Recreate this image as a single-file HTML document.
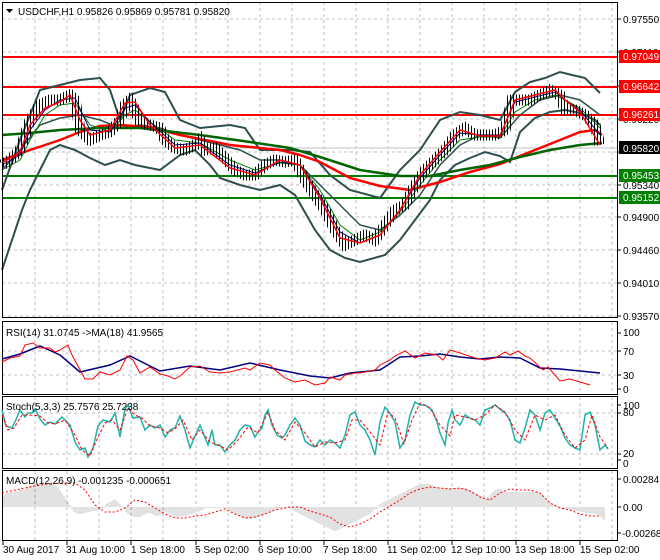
<!DOCTYPE html>
<html><head><meta charset="utf-8"><style>
html,body{margin:0;padding:0;background:#fff;width:660px;height:560px;overflow:hidden}
svg text{font-family:"Liberation Sans",sans-serif;font-size:10px;fill:#000}
</style></head><body>
<svg width="660" height="560" xmlns="http://www.w3.org/2000/svg">
<defs>
<pattern id="bars" width="3" height="20" patternUnits="userSpaceOnUse"><rect x="0" y="0" width="1" height="20" fill="#000"/></pattern>
</defs>
<rect width="660" height="560" fill="#fff"/>
<g stroke="#c0c0c0" stroke-dasharray="3,3" stroke-width="1">
<path d="M35 2V318M67 2V318M99 2V318M131 2V318M163 2V318M196 2V318M228 2V318M260 2V318M292 2V318M324 2V318M356 2V318M388 2V318M420 2V318M452 2V318M484 2V318M516 2V318M548 2V318M580 2V318M612 2V318"/>
<path d="M2 19H617M2 52H617M2 86H617M2 119H617M2 152H617M2 185H617M2 217H617M2 250H617M2 283H617M2 316H617"/>
<path d="M35 322V395M67 322V395M99 322V395M131 322V395M163 322V395M196 322V395M228 322V395M260 322V395M292 322V395M324 322V395M356 322V395M388 322V395M420 322V395M452 322V395M484 322V395M516 322V395M548 322V395M580 322V395M612 322V395"/>
<path d="M2 351H617M2 375H617"/>
<path d="M35 397V469M67 397V469M99 397V469M131 397V469M163 397V469M196 397V469M228 397V469M260 397V469M292 397V469M324 397V469M356 397V469M388 397V469M420 397V469M452 397V469M484 397V469M516 397V469M548 397V469M580 397V469M612 397V469"/>
<path d="M2 413H617M2 454H617"/>
<path d="M35 471V540M67 471V540M99 471V540M131 471V540M163 471V540M196 471V540M228 471V540M260 471V540M292 471V540M324 471V540M356 471V540M388 471V540M420 471V540M452 471V540M484 471V540M516 471V540M548 471V540M580 471V540M612 471V540"/>
</g>
<line x1="2" y1="148" x2="617" y2="148" stroke="#c0c0c0"/>
<g stroke-width="2">
<line x1="2" y1="57" x2="617" y2="57" stroke="#ff0000"/>
<line x1="2" y1="87" x2="617" y2="87" stroke="#ff0000"/>
<line x1="2" y1="115" x2="617" y2="115" stroke="#ff0000"/>
<line x1="2" y1="176" x2="617" y2="176" stroke="#008000"/>
<line x1="2" y1="198" x2="617" y2="198" stroke="#008000"/>
</g>
<g fill="none" stroke="#2f4f4f" stroke-width="2">
<polyline points="2,190 20,140 40,90 60,85 80,80 100,78 110,90 120,120 130,95 150,88 165,92 180,120 200,128 230,125 245,128 260,150 290,150 310,152 330,175 350,190 380,198 400,170 420,150 440,120 460,112 480,115 500,120 515,92 530,82 545,78 560,72 572,75 585,78 600,93"/>
<polyline points="2,270 12,240 22,210 30,190 40,170 50,150 60,145 75,150 90,158 105,165 120,160 135,165 160,170 180,155 195,150 210,165 220,178 240,185 260,190 280,185 295,195 315,230 330,250 345,258 360,262 385,255 400,240 415,220 430,200 440,180 455,165 470,158 485,152 500,156 510,162 520,132 535,118 550,112 565,110 580,113 595,120 600,125"/>
<polyline points="2,170 20,150 40,125 60,118 80,115 100,120 120,128 140,125 160,128 180,135 200,140 220,145 240,150 260,160 280,160 300,165 320,185 340,205 360,225 380,230 400,215 420,195 440,165 460,145 480,135 500,138 520,115 540,100 560,95 580,100 600,115" stroke-width="1.5"/>
</g>
<polyline fill="none" stroke="#ff0000" stroke-width="2.5" points="2,160 30,150 60,140 80,132 100,126 120,125 150,127 180,135 230,145 280,150 300,155 320,162 350,178 380,186 410,190 440,182 470,172 500,164 530,152 560,140 580,132 595,130 602,135"/>
<polyline fill="none" stroke="#006400" stroke-width="2.5" points="2,135 30,133 60,130 100,128 140,128 200,135 250,142 290,148 320,157 360,170 400,176 430,176 460,170 490,165 520,157 550,150 580,145 602,143"/>
<polyline fill="none" stroke="#008000" stroke-width="1" points="2,170 20,160 30,140 45,115 60,105 75,103 90,125 110,132 125,115 135,110 150,122 175,140 200,143 230,160 255,170 280,163 300,165 320,190 340,225 360,240 380,232 400,212 420,185 440,160 460,140 480,137 500,137 515,112 535,100 555,95 565,100 580,108 600,128"/>
<polyline fill="none" stroke="#000080" stroke-width="1" points="2,165 20,155 30,130 45,110 60,100 75,98 90,130 110,132 125,108 135,105 150,122 175,145 200,143 230,165 255,173 280,162 300,165 320,195 340,232 360,243 380,235 400,210 420,178 440,155 460,133 480,135 500,135 515,102 535,97 555,92 565,100 580,110 600,135"/>
<polyline fill="none" stroke="url(#bars)" stroke-width="11" points="2,165 10,160 20,150 30,120 40,105 50,100 60,100 70,95 75,100 80,130 90,140 100,135 110,132 120,120 125,105 130,100 135,110 140,122 150,125 160,128 165,140 175,148 185,150 195,145 200,140 205,150 215,148 225,158 235,170 245,175 255,175 265,165 275,160 285,162 295,160 305,180 315,195 325,210 335,230 345,245 355,240 365,235 375,240 385,225 395,210 405,205 415,185 425,170 435,160 445,150 455,135 465,128 475,135 485,135 495,135 505,130 512,100 520,100 530,100 540,95 550,90 560,95 565,110 575,110 585,115 595,125 600,145"/>
<polyline fill="none" stroke="#ff0000" stroke-width="1.5" points="2,163 20,152 30,125 45,108 60,102 70,95 80,120 90,135 110,130 125,103 135,102 150,125 175,148 200,145 230,168 255,175 280,160 300,165 320,198 340,238 360,243 380,235 400,210 420,175 440,152 460,130 480,136 500,136 515,100 535,95 555,90 565,100 580,112 600,145"/>
<g fill="none" stroke="#000" stroke-width="1">
<rect x="2.5" y="2.5" width="615" height="315"/>
<rect x="2.5" y="321.5" width="615" height="73"/>
<rect x="2.5" y="396.5" width="615" height="72"/>
<rect x="2.5" y="470.5" width="615" height="70"/>
</g>
<g stroke="#000"><path d="M617 19h4M617 52h4M617 86h4M617 119h4M617 152h4M617 185h4M617 217h4M617 250h4M617 283h4M617 316h4M617 333h4M617 351h4M617 375h4M617 389h4M617 405h4M617 413h4M617 454h4M617 460h4M617 479h4M617 507h4M617 533h4M3 541v4M67 541v4M131 541v4M196 541v4M260 541v4M324 541v4M388 541v4M452 541v4M516 541v4M580 541v4"/></g>
<g>
<text x="623" y="23">0.97550</text>
<text x="623" y="56">0.97110</text>
<text x="623" y="90">0.96660</text>
<text x="623" y="123">0.96220</text>
<text x="623" y="189">0.95340</text>
<text x="623" y="221">0.94900</text>
<text x="623" y="254">0.94460</text>
<text x="623" y="287">0.94010</text>
<text x="623" y="320">0.93570</text>
</g>
<rect x="619" y="50" width="41" height="13" fill="#ff0000"/><text x="623" y="60" style="fill:#fff">0.97049</text>
<rect x="619" y="80" width="41" height="13" fill="#ff0000"/><text x="623" y="90" style="fill:#fff">0.96642</text>
<rect x="619" y="108" width="41" height="13" fill="#ff0000"/><text x="623" y="118" style="fill:#fff">0.96261</text>
<rect x="619" y="141" width="41" height="13" fill="#000"/><text x="623" y="152" style="fill:#fff">0.95820</text>
<rect x="619" y="169" width="41" height="13" fill="#008000"/><text x="623" y="179" style="fill:#fff">0.95453</text>
<rect x="619" y="191" width="41" height="13" fill="#008000"/><text x="623" y="201" style="fill:#fff">0.95152</text>
<path d="M6 9h7l-3.5 4z" fill="#000"/>
<text x="18" y="15">USDCHF,H1  0.95826 0.95869 0.95781 0.95820</text>
<text x="6" y="336">RSI(14) 31.0745  -&gt;MA(18) 41.9565</text>
<polyline fill="none" stroke="#000080" stroke-width="1.5" points="2,359 20,354 40,346 60,355 80,372 110,365 130,356 160,371 190,366 220,370 250,363 280,370 310,376 330,378 350,373 380,370 400,357 420,356 440,354 460,357 480,359 500,357 520,358 540,368 560,369 600,373"/>
<polyline fill="none" stroke="#ff0000" stroke-width="1" points="2,362 10,358 20,356 25,345 33,343 40,348 50,348 55,352 60,350 68,345 72,355 78,366 85,379 93,379 100,372 110,375 120,370 127,356 133,360 140,373 150,367 160,374 168,376 175,379 180,376 190,367 200,366 210,372 220,373 230,372 245,368 250,370 260,363 270,365 275,370 285,378 295,382 305,380 315,385 325,383 330,377 340,380 345,375 355,373 360,373 375,370 380,365 390,360 395,356 405,351 415,358 425,353 437,355 443,360 450,350 460,353 475,358 485,360 495,358 505,352 510,355 518,351 525,356 530,358 543,370 548,367 560,381 570,379 580,382 590,385"/>
<text x="623" y="336">100</text><text x="623" y="355">70</text><text x="623" y="379">30</text><text x="623" y="393">0</text>
<polyline fill="none" stroke="#20b2aa" stroke-width="1.5" points="2,410 6,426 12,428 15,422 20,410 25,417 28,413 32,413 35,409 40,419 45,425 50,422 55,424 62,417 70,425 75,442 80,450 85,448 88,457 93,448 98,426 103,420 110,422 115,413 120,437 125,409 128,405 133,418 140,417 145,430 150,425 155,428 160,425 165,437 170,430 175,428 180,416 185,430 190,448 195,436 200,425 208,445 212,430 215,445 220,445 225,452 230,445 235,440 240,430 245,425 250,426 255,437 258,432 262,428 265,415 268,410 272,425 277,435 282,438 285,435 290,425 295,418 300,425 305,441 310,445 315,447 320,440 325,445 330,440 335,443 340,448 345,435 350,415 355,412 360,425 365,430 370,440 375,455 380,422 385,407 389,412 395,422 400,448 405,440 410,415 415,402 420,405 425,405 428,407 432,410 437,422 440,433 445,445 448,423 452,410 455,420 460,425 465,415 470,418 475,420 480,425 485,410 490,408 495,405 500,409 505,413 510,420 515,440 520,443 525,428 530,410 535,415 540,430 545,413 550,410 560,426 565,438 570,445 575,448 580,450 585,415 590,412 595,425 600,450 605,445 608,449"/>
<polyline fill="none" stroke="#ff0000" stroke-width="1" stroke-dasharray="3,2" points="2,415 8,430 14,428 22,415 30,415 40,416 48,423 55,424 65,420 75,435 82,450 90,456 98,437 105,423 112,420 120,430 128,408 135,415 142,418 150,426 160,428 168,433 176,428 183,420 192,440 200,430 210,442 220,446 228,450 238,440 248,427 258,433 268,412 275,430 285,440 295,422 305,433 315,447 325,442 335,443 345,440 352,420 360,420 370,432 380,445 388,412 395,418 404,444 412,420 420,403 430,408 440,425 450,436 455,415 465,417 475,420 485,415 495,405 505,412 515,430 525,440 535,415 545,420 555,415 565,435 575,448 585,440 592,415 600,437 608,448"/>
<text x="6" y="410">Stoch(5,3,3) 25.7576 25.7238</text>
<text x="623" y="409">100</text><text x="623" y="416">80</text><text x="623" y="457">20</text><text x="623" y="467">0</text>
<g stroke="#c4c4c4" stroke-width="1">
<path d="M4 507V495M6 507V494M8 507V493M10 507V492M12 507V492M14 507V492M16 507V491M18 507V491M20 507V490M22 507V490M24 507V489M26 507V488M28 507V487M30 507V486M32 507V485M34 507V485M36 507V484M38 507V484M40 507V484M42 507V484M44 507V484M46 507V484M48 507V484M50 507V484M52 507V484M54 507V485M56 507V486M58 507V488M60 507V490M62 507V493M64 507V496M66 507V499M68 507V502M70 507V505M72 507V509M74 507V512M76 507V513M78 507V514M80 507V514M82 507V514M84 507V513M86 507V513M88 507V512M90 507V512M92 507V511M94 507V511M96 507V511M98 507V510M100 507V510M102 507V509M104 507V508M106 507V504M108 507V503M110 507V502M112 507V501M114 507V500M116 507V500M118 507V502M120 507V504M122 507V506"/>
<path d="M124 507V509M126 507V512M128 507V514M130 507V515M132 507V516M134 507V517M136 507V517M138 507V517M140 507V517M142 507V516M144 507V515M146 507V514M148 507V513M150 507V513M152 507V514M154 507V515M156 507V516M158 507V516M160 507V515M162 507V514M164 507V513M166 507V512M168 507V513M170 507V514M172 507V515M174 507V516M176 507V517M178 507V517M180 507V516M182 507V516M184 507V516M186 507V516M188 507V515M190 507V514M192 507V514M194 507V513M196 507V512M198 507V512M200 507V511M202 507V510M204 507V509M206 507V508M208 507V508M210 507V508M212 507V508M214 507V508M216 507V508M218 507V508M220 507V508M222 507V508M224 507V508M226 507V509M228 507V510M230 507V511M232 507V512M234 507V513M236 507V514M238 507V515M240 507V516M242 507V517M244 507V518M246 507V519M248 507V519M250 507V519M252 507V519M254 507V518M256 507V518M258 507V517M260 507V516M262 507V516M264 507V515M266 507V514M268 507V513M270 507V512M272 507V512M274 507V511M276 507V510M278 507V509M280 507V508M282 507V508M284 507V508M286 507V508M288 507V508M290 507V509M292 507V510M294 507V511M296 507V512M298 507V513M300 507V514M302 507V515M304 507V516M306 507V517M308 507V518M310 507V519M312 507V520M314 507V521M316 507V522M318 507V523M320 507V524M322 507V525M324 507V526M326 507V527M328 507V528M330 507V529M332 507V530M334 507V531M336 507V531M338 507V530M340 507V529M342 507V528M344 507V527M346 507V526M348 507V525M350 507V524M352 507V523M354 507V522M356 507V521M358 507V520M360 507V519M362 507V518M364 507V517M366 507V516M368 507V515M370 507V514M372 507V512M374 507V510M376 507V509M378 507V508"/>
<path d="M380 507V504M382 507V503M384 507V502M386 507V501M388 507V500M390 507V499M392 507V498M394 507V497M396 507V496M398 507V495M400 507V494M402 507V493M404 507V492M406 507V491M408 507V490M410 507V489M412 507V488M414 507V487M416 507V486M418 507V485M420 507V485M422 507V484M424 507V484M426 507V484M428 507V484M430 507V484M432 507V485M434 507V486M436 507V487M438 507V487M440 507V488M442 507V488M444 507V488M446 507V488M448 507V488M450 507V488M452 507V488M454 507V488M456 507V488M458 507V488M460 507V488M462 507V488M464 507V488M466 507V488M468 507V489M470 507V490M472 507V491M474 507V492M476 507V493M478 507V494M480 507V495M482 507V496M484 507V497M486 507V498M488 507V497M490 507V495M492 507V493M494 507V491M496 507V490M498 507V489M500 507V489M502 507V490M504 507V491M506 507V492M508 507V492M510 507V492M512 507V492M514 507V492M516 507V492M518 507V492M520 507V492M522 507V492M524 507V492M526 507V492M528 507V492M530 507V492M532 507V492M534 507V492M536 507V492M538 507V492M540 507V493M542 507V494M544 507V496M546 507V498M548 507V500M550 507V502M552 507V503M554 507V504M556 507V505M558 507V506"/>
<path d="M560 507V508M562 507V509M564 507V509M566 507V509M568 507V509M570 507V510M572 507V510M574 507V511M576 507V511M578 507V511M580 507V512M582 507V512M584 507V512M586 507V513M588 507V513M590 507V513M592 507V513M594 507V514M596 507V514M598 507V515M600 507V516M602 507V518M604 507V520"/>
</g>
<polyline fill="none" stroke="#ff0000" stroke-width="1" stroke-dasharray="2,2" points="2,493 20,489 40,485 60,483 75,483 85,490 95,505 105,512 115,512 125,508 135,500 145,502 155,508 165,514 175,518 185,518 195,516 205,515 215,512 225,509 235,514 245,518 255,517 265,514 275,510 290,507 300,507 310,511 320,514 330,517 340,524 350,527 360,524 370,519 380,512 390,506 400,500 410,493 420,489 430,487 440,488 450,489 460,488 470,491 480,497 490,500 500,493 510,489 520,490 530,490 540,493 550,503 560,508 570,510 580,514 590,516 600,516"/>
<text x="6" y="484">MACD(12,26,9) -0.001235 -0.000651</text>
<text x="623" y="483">0.00284</text><text x="623" y="511">0.00</text><text x="622" y="537">-0.002682</text>
<g>
<text x="3" y="553">30 Aug 2017</text>
<text x="66" y="553">31 Aug 10:00</text>
<text x="131" y="553">1 Sep 18:00</text>
<text x="195" y="553">5 Sep 02:00</text>
<text x="258" y="553">6 Sep 10:00</text>
<text x="323" y="553">7 Sep 18:00</text>
<text x="387" y="553">11 Sep 02:00</text>
<text x="451" y="553">12 Sep 10:00</text>
<text x="515" y="553">13 Sep 18:00</text>
<text x="580" y="553">15 Sep 02:00</text>
</g>
</svg>
</body></html>
